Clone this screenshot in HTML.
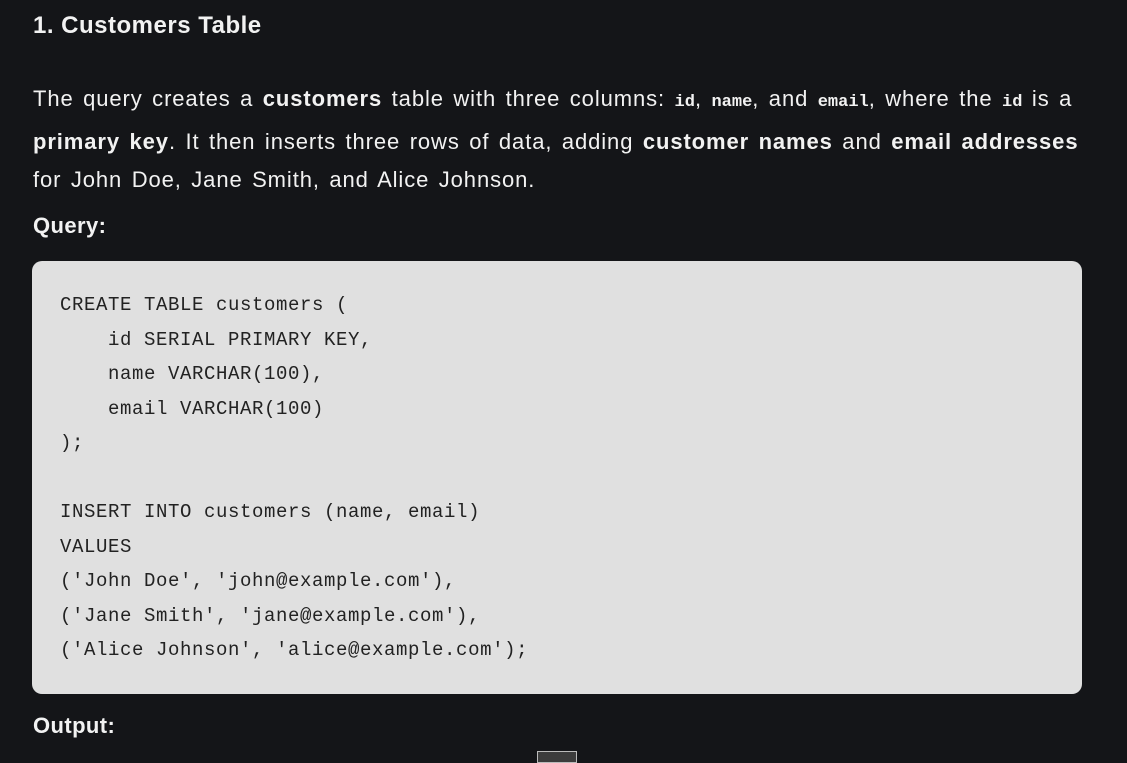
<!DOCTYPE html>
<html><head><style>
body{margin:0;background:#141518;width:1127px;height:758px;overflow:hidden;font-family:"Liberation Sans",sans-serif;color:#f2f2f2;position:relative}
.h{position:absolute;left:33px;top:12px;font-size:24px;font-weight:bold;letter-spacing:0.5px}
.p{position:absolute;left:33px;top:80px;font-size:22px;line-height:38.5px;white-space:nowrap;letter-spacing:0.9px;word-spacing:2.5px}
.p code{font-family:"Liberation Mono",monospace;font-size:17px;font-weight:bold;letter-spacing:0}
.q{position:absolute;left:33px;top:213px;font-size:22px;font-weight:bold;letter-spacing:0.4px}
.o{position:absolute;left:33px;top:713px;font-size:22px;font-weight:bold;letter-spacing:0.4px}
.c{position:absolute;left:32px;top:261px;width:1050px;height:433px;background:#e0e0e0;border-radius:10px}
pre{margin:0;position:absolute;left:28px;top:27px;font-family:"Liberation Mono",monospace;font-size:19px;letter-spacing:0.6px;line-height:34.5px;color:#222}
.b{position:absolute;left:537px;top:751px;width:38px;height:10px;background:#3c3c3c;border:1px solid #bbb}
</style></head><body>
<div class="h">1. Customers Table</div>
<div class="p">The query creates a <b>customers</b> table with three columns: <code>id</code>, <code>name</code>, and <code>email</code>, where the <code>id</code> is a<br><b>primary key</b>. It then inserts three rows of data, adding <b>customer names</b> and <b>email addresses</b><br>for John Doe, Jane Smith, and Alice Johnson.</div>
<div class="q">Query:</div>
<div class="c"><pre>CREATE TABLE customers (
    id SERIAL PRIMARY KEY,
    name VARCHAR(100),
    email VARCHAR(100)
);

INSERT INTO customers (name, email)
VALUES
('John Doe', 'john@example.com'),
('Jane Smith', 'jane@example.com'),
('Alice Johnson', 'alice@example.com');</pre></div>
<div class="o">Output:</div>
<div class="b"></div>
</body></html>
